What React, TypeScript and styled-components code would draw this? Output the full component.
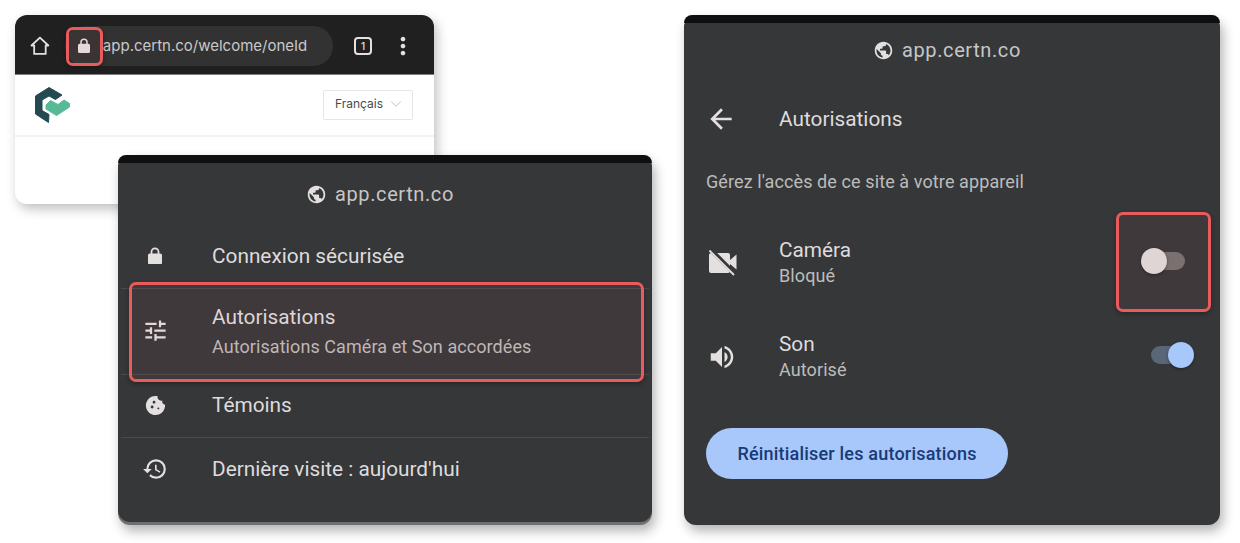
import styled, { createGlobalStyle } from "styled-components";
import {
  MdArrowBack,
  MdCookie,
  MdHistory,
  MdMoreVert,
  MdPublic,
  MdTune,
  MdVolumeUp,
} from "react-icons/md";
import { FiChevronDown } from "react-icons/fi";

const GlobalStyle = createGlobalStyle`
  html, body {
    margin: 0;
    padding: 0;
    background: #fff;
    overflow: hidden;
  }
  body {
    font-family: Roboto, "Liberation Sans", sans-serif;
  }
`;

const Logo = () => (
  <svg width="36" height="36" viewBox="0 0 36 36">
    <path
      d="M14 0.5 L27 8 L20.5 12.5 L14 9 L7 13 L7 23.5 L14 27.5 L13.5 35.5 L0.5 27 L0.5 9 Z"
      fill="#234a50"
      stroke="#234a50"
      strokeLinejoin="round"
    />
    <path
      d="M11 18 L15.5 13.5 L23 17.5 L29 13 L34.5 16.5 L34.5 20 L21.5 28.5 L11 22 Z"
      fill="#57b998"
      stroke="#57b998"
      strokeLinejoin="round"
    />
  </svg>
);

const LockGlyph = ({ size }: { size: number }) => (
  <svg width={size} height={size * 1.25} viewBox="0 0 16 20" fill="currentColor">
    <path
      d="M3 7.5V5.5a5 5 0 0 1 10 0v2h1a2 2 0 0 1 2 2V18a2 2 0 0 1-2 2H2a2 2 0 0 1-2-2V9.500a2 2 0 0 1 2-2h1zM5 7.500h6V5.500a3 3 0 0 0-6 0v2z"
      fillRule="evenodd"
    />
  </svg>
);

const HomeGlyph = () => (
  <svg width="20" height="20" viewBox="0 0 20 20" fill="none" stroke="currentColor" strokeWidth="1.8" strokeLinejoin="round">
    <path d="M10 1.500 L18.500 9.500 H15.800 V18 H4.200 V9.500 H1.500 Z" />
  </svg>
);

// blocked camera: filled body and lens, cut by a slash
const CameraOffGlyph = () => (
  <svg width="28" height="26" viewBox="0 0 28 26">
    <path
      d="M2 3H19A2 2 0 0 1 21 5V10L27.500 4.500V19.500L21 14V21A2 2 0 0 1 19 23H2A2 2 0 0 1 0 21V5A2 2 0 0 1 2 3Z"
      fill="currentColor"
    />
    <path d="M1 -1L26 24" stroke="#363739" strokeWidth="4.500" />
    <path d="M0.500 0.500L25 25" stroke="currentColor" strokeWidth="1.800" />
  </svg>
);

const App = () => {
  return (
    <>
      <GlobalStyle />
      <Stage>
        <LeftColumn>
          <BrowserCard>
            <BrowserBar>
              <HomeGlyph />
              <AddressPill>
                <PillLock><LockGlyph size={12} /></PillLock>
                <AddressText>app.certn.co/welcome/oneId</AddressText>
              </AddressPill>
              <TabCount>1</TabCount>
              <MoreIcon />
            </BrowserBar>
            <SiteHeader>
              <Logo />
              <LanguageBox>
                <span>Français</span>
                <FiChevronDown size={18} color="#a9adb0" strokeWidth={1} />
              </LanguageBox>
            </SiteHeader>
          </BrowserCard>
          <Callout $left={51} $top={12} $width={37} $height={39} />

          <MenuCard>
            <MenuBody>
              <TopStrip />
              <DomainRow>
                <MdPublic size={21} />
                <DomainText>app.certn.co</DomainText>
              </DomainRow>
              <MenuRow $height={63}>
                <MenuIcon><LockGlyph size={14} /></MenuIcon>
                <MenuTitle>Connexion sécurisée</MenuTitle>
              </MenuRow>
              <MenuRow $height={86} $divider>
                <MenuIcon><MdTune size={27} /></MenuIcon>
                <div>
                  <MenuTitle>Autorisations</MenuTitle>
                  <MenuSub>Autorisations Caméra et Son accordées</MenuSub>
                </div>
              </MenuRow>
              <MenuRow $height={63} $divider>
                <MenuIcon><MdCookie size={23} /></MenuIcon>
                <MenuTitle>Témoins</MenuTitle>
              </MenuRow>
              <MenuRow $height={64} $divider>
                <MenuIcon><MdHistory size={26} /></MenuIcon>
                <MenuTitle>Dernière visite : aujourd'hui</MenuTitle>
              </MenuRow>
            </MenuBody>
            <Callout $left={11} $top={127} $width={515} $height={100} />
          </MenuCard>
        </LeftColumn>

        <PermissionCard>
          <TopStrip />
          <DomainRow $height={54}>
            <MdPublic size={21} />
            <DomainText>app.certn.co</DomainText>
          </DomainRow>
          <TitleRow>
            <BackIcon />
            <PanelTitle>Autorisations</PanelTitle>
          </TitleRow>
          <PanelHint>Gérez l'accès de ce site à votre appareil</PanelHint>
          <PermissionRow>
            <PermissionIcon><CameraOffGlyph /></PermissionIcon>
            <PermissionText>
              <PanelTitle>Caméra</PanelTitle>
              <PermissionState>Bloqué</PermissionState>
            </PermissionText>
            <Switch />
          </PermissionRow>
          <PermissionRow>
            <PermissionIcon><MdVolumeUp size={30} /></PermissionIcon>
            <PermissionText>
              <PanelTitle>Son</PanelTitle>
              <PermissionState>Autorisé</PermissionState>
            </PermissionText>
            <Switch $on />
          </PermissionRow>
          <ResetButton>Réinitialiser les autorisations</ResetButton>
          <Callout $left={432} $top={197} $width={95} $height={100} />
        </PermissionCard>
      </Stage>
    </>
  );
};

export default App;

const Stage = styled.div`
  display: flex;
  gap: 32px;
  width: 1240px;
  height: 543px;
  box-sizing: border-box;
  padding: 15px 0 0 15px;
  overflow: hidden;
`;

const LeftColumn = styled.div`
  position: relative;
  width: 637px;
  height: 510px;
`;

const BrowserCard = styled.div`
  width: 419px;
  height: 189px;
  background: #fff;
  border-radius: 12px;
  overflow: hidden;
  box-shadow: 3px 5px 12px rgba(0, 0, 0, 0.25);
`;

const BrowserBar = styled.div`
  display: flex;
  align-items: center;
  height: 60px;
  box-sizing: border-box;
  padding: 2px 17px 0 15px;
  background: #202020;
  border-bottom: 1px solid #7d7d7d;
  color: #e4e0e0;
`;

const AddressPill = styled.div`
  display: flex;
  align-items: center;
  width: 270px;
  height: 40px;
  margin: 0 21px 0 15px;
  border-radius: 20px;
  background: #323232;
`;

const PillLock = styled.span`
  display: flex;
  flex: none;
  margin-left: 13px;
  color: #e4dfdf;
`;

const AddressText = styled.span`
  margin-left: 13px;
  font-family: Inter, sans-serif;
  font-size: 15px;
  color: #c9c9c9;
  white-space: nowrap;
`;

const TabCount = styled.div`
  display: flex;
  flex: none;
  align-items: center;
  justify-content: center;
  width: 14px;
  height: 14px;
  border: 2px solid #e4e0e0;
  border-radius: 4px;
  font-family: Inter, sans-serif;
  font-size: 10px;
  font-weight: 500;
`;

const MoreIcon = styled(MdMoreVert)`
  flex: none;
  width: 28px;
  height: 28px;
  margin-left: 17px;
`;

const SiteHeader = styled.div`
  display: flex;
  align-items: center;
  justify-content: space-between;
  height: 62px;
  box-sizing: border-box;
  padding: 0 21px 1px 20px;
  border-bottom: 2px solid #f2f2f2;
`;

const LanguageBox = styled.div`
  display: flex;
  align-items: center;
  justify-content: space-between;
  width: 90px;
  height: 30px;
  box-sizing: border-box;
  padding: 0 7px 2px 11px;
  border: 1px solid #e6e6e6;
  border-radius: 2px;
  font-family: Inter, sans-serif;
  font-size: 12px;
  color: #4a4a4a;
`;

const Callout = styled.div<{ $left: number; $top: number; $width: number; $height: number }>`
  position: absolute;
  left: ${(p) => p.$left}px;
  top: ${(p) => p.$top}px;
  width: ${(p) => p.$width}px;
  height: ${(p) => p.$height}px;
  box-sizing: border-box;
  border: 3px solid #ea5b5d;
  border-radius: 7px;
  background: rgba(234, 91, 93, 0.05);
  box-shadow: 0 2px 5px rgba(0, 0, 0, 0.3);
`;

const MenuCard = styled.div`
  position: absolute;
  left: 103px;
  top: 140px;
  width: 534px;
  height: 370px;
  border-radius: 12px;
  background: #6f6f6f;
  box-shadow: 3px 6px 12px rgba(0, 0, 0, 0.3);
  color: #e4e0e0;
`;

const MenuBody = styled.div`
  height: 367px;
  border-radius: 12px;
  background: #363739;
`;

const TopStrip = styled.div`
  height: 8px;
  background: #0f0f0f;
  border-radius: 12px 12px 0 0;
`;

const DomainRow = styled.div<{ $height?: number }>`
  display: flex;
  align-items: center;
  justify-content: center;
  gap: 8px;
  height: ${(p) => p.$height ?? 62}px;
  box-sizing: border-box;
  padding-right: 10px;
  color: #e4e0e0;
`;

const DomainText = styled.span`
  font-size: 20px;
  letter-spacing: 0.6px;
  color: #c6c6c6;
`;

const MenuRow = styled.div<{ $height: number; $divider?: boolean }>`
  display: flex;
  align-items: center;
  height: ${(p) => p.$height}px;
  box-sizing: border-box;
  margin: 0 3px;
  padding: 0 0 2px 20px;
  border-top: ${(p) => (p.$divider ? "1px solid #4a4b4d" : "0")};
`;

const MenuIcon = styled.div`
  display: flex;
  flex: none;
  justify-content: center;
  width: 28px;
  margin-right: 43px;
`;

const MenuTitle = styled.div`
  font-size: 20.8px;
  line-height: 28px;
  color: #dedcdc;
`;

const MenuSub = styled.div`
  margin-top: 4px;
  font-size: 18px;
  letter-spacing: 0.07px;
  line-height: 24px;
  color: #bdbcbc;
`;

const PermissionCard = styled.div`
  position: relative;
  flex: none;
  width: 536px;
  height: 510px;
  border-radius: 12px;
  background: #363739;
  box-shadow: 3px 6px 12px rgba(0, 0, 0, 0.3);
  color: #e4e0e0;
`;

const TitleRow = styled.div`
  display: flex;
  align-items: center;
  height: 84px;
  padding-left: 21px;
`;

const BackIcon = styled(MdArrowBack)`
  flex: none;
  width: 32px;
  height: 32px;
  margin-right: 42px;
`;

const PanelTitle = styled.div`
  font-size: 20.8px;
  line-height: 26px;
  color: #dedcdc;
`;

const PanelHint = styled.div`
  margin: 9px 0 22px 22px;
  font-size: 18px;
  letter-spacing: 0.1px;
  line-height: 24px;
  color: #bdbcbc;
`;

const PermissionRow = styled.div`
  display: flex;
  align-items: center;
  height: 94px;
  padding: 0 35px 0 21px;
`;

const PermissionIcon = styled.div`
  display: flex;
  flex: none;
  justify-content: flex-end;
  width: 32px;
  margin-right: 42px;
`;

const PermissionText = styled.div`
  flex: 1;
  margin-bottom: 2px;
`;

const PermissionState = styled.div`
  margin-top: 1px;
  font-size: 18px;
  letter-spacing: 0.1px;
  line-height: 24px;
  color: #bdbcbc;
`;

const Switch = styled.div<{ $on?: boolean }>`
  position: relative;
  width: 34px;
  height: 18px;
  margin-bottom: 4px;
  border-radius: 9px;
  background: ${(p) => (p.$on ? "#596678" : "#757171")};
  &::after {
    content: "";
    position: absolute;
    top: -4px;
    left: ${(p) => (p.$on ? "17px" : "-10px")};
    width: 26px;
    height: 26px;
    border-radius: 50%;
    background: ${(p) => (p.$on ? "#a8c7fa" : "#e0dcdc")};
    box-shadow: 0 1px 3px rgba(0, 0, 0, 0.4);
  }
`;

const ResetButton = styled.button`
  display: block;
  width: 302px;
  height: 51px;
  margin: 24px 0 0 22px;
  padding: 0;
  border: 0;
  border-radius: 26px;
  background: #a8c7fa;
  font-family: Roboto, sans-serif;
  font-size: 18px;
  font-weight: 500;
  letter-spacing: 0.2px;
  color: #173a78;
`;
